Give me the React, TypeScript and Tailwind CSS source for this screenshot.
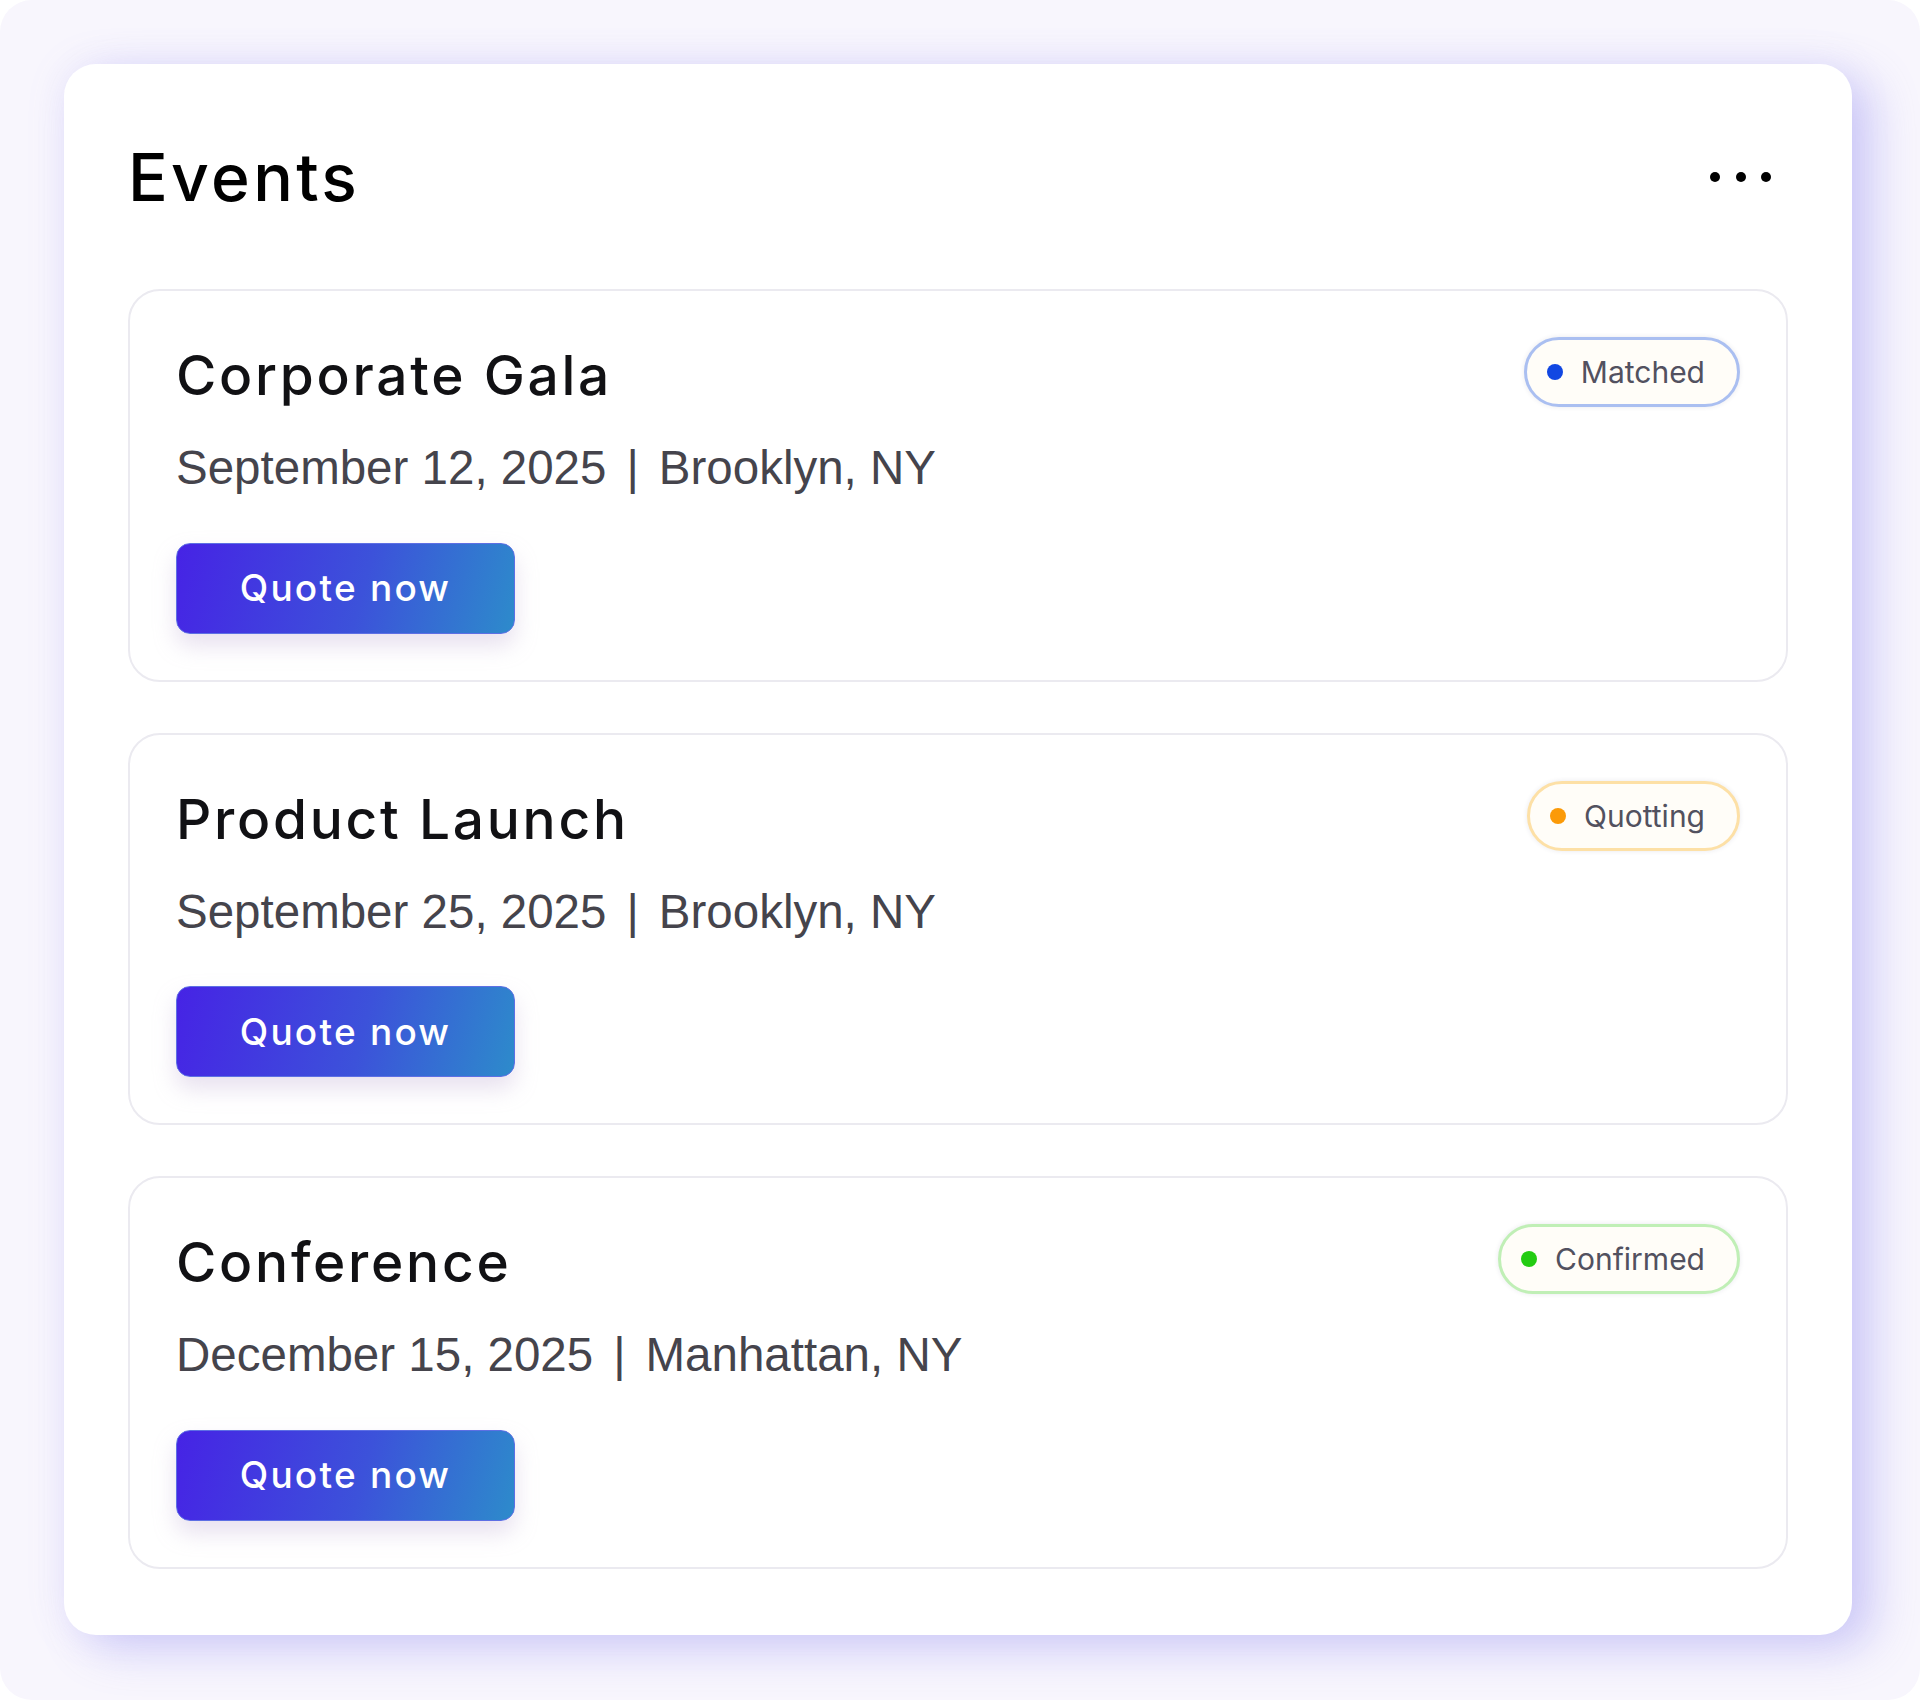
import React from 'react';

type Status = 'Matched' | 'Quotting' | 'Confirmed';

interface EventItem {
  title: string;
  date: string;
  place: string;
  status: Status;
}

const EVENTS: EventItem[] = [
  { title: 'Corporate Gala', date: 'September 12, 2025', place: 'Brooklyn, NY', status: 'Matched' },
  { title: 'Product Launch', date: 'September 25, 2025', place: 'Brooklyn, NY', status: 'Quotting' },
  { title: 'Conference', date: 'December 15, 2025', place: 'Manhattan, NY', status: 'Confirmed' },
];

const BADGE: Record<Status, { border: string; dot: string }> = {
  Matched: { border: 'border-[#aabff1]', dot: 'bg-[#1147e2]' },
  Quotting: { border: 'border-[#fde0a6]', dot: 'bg-[#fb9a08]' },
  Confirmed: { border: 'border-[#c0efb6]', dot: 'bg-[#23cc12]' },
};

function StatusBadge({ status }: { status: Status }) {
  const s = BADGE[status];
  return (
    <div
      className={`flex h-[70px] items-center gap-[18px] rounded-full border-[3px] ${s.border} bg-[#fffdf8] pl-5 pr-8 shadow-[0_0_5px_rgba(40,40,80,0.10)]`}
    >
      <span className={`h-4 w-4 rounded-full ${s.dot}`} />
      <span className="text-[30px] leading-none text-[#52515f]">{status}</span>
    </div>
  );
}

function EventCard({ item }: { item: EventItem }) {
  return (
    <div className="rounded-[32px] border-2 border-[#ebeaf0] bg-white p-[46px]">
      <div className="flex items-start justify-between">
        <h3 className="mt-[11px] text-[55px] font-medium leading-none tracking-[0.05em] text-[#111114]">{item.title}</h3>
        <StatusBadge status={item.status} />
      </div>
      <div
        className="mt-[37px] flex items-center text-[47.5px] leading-none text-[#45444c]"
        style={{ fontFamily: '"Liberation Sans", Arial, sans-serif' }}
      >
        <span>{item.date}</span>
        <span className="mx-[20px]">|</span>
        <span>{item.place}</span>
      </div>
      <button className="mt-[51px] flex h-[91px] w-[339px] items-center justify-center rounded-[14px] border border-[#5d6fe4] bg-[linear-gradient(105deg,#4623e5_0%,#3c52da_55%,#2d8bcb_100%)] text-[37px] font-medium tracking-[0.06em] text-white shadow-[0_12px_22px_rgba(190,170,210,0.35)]">
        Quote now
      </button>
    </div>
  );
}

export default function App() {
  return (
    <div
      className="h-[1700px] w-[1920px] overflow-hidden rounded-[32px] bg-[#f8f6fd] pl-16 pt-16"
      style={{ fontFamily: 'Inter, "Noto Sans", sans-serif' }}
    >
      <div className="w-[1788px] rounded-[32px] bg-white px-16 pb-[66px] pt-16 shadow-[22px_14px_46px_rgba(120,112,240,0.30),0_0_40px_rgba(150,140,240,0.12)]">
        {/* header */}
        <div className="mb-[63px] flex h-[98px] items-center justify-between pr-4">
          <h1 className="text-[66px] font-medium leading-none tracking-[0.05em] text-black">Events</h1>
          <svg width="62" height="12" viewBox="0 0 62 12" fill="#000">
            <circle cx="5" cy="6" r="5" />
            <circle cx="31" cy="6" r="5" />
            <circle cx="56" cy="6" r="5" />
          </svg>
        </div>

        <div className="flex flex-col gap-[51px]">
          {EVENTS.map((e) => (
            <EventCard key={e.title} item={e} />
          ))}
        </div>
      </div>
    </div>
  );
}
